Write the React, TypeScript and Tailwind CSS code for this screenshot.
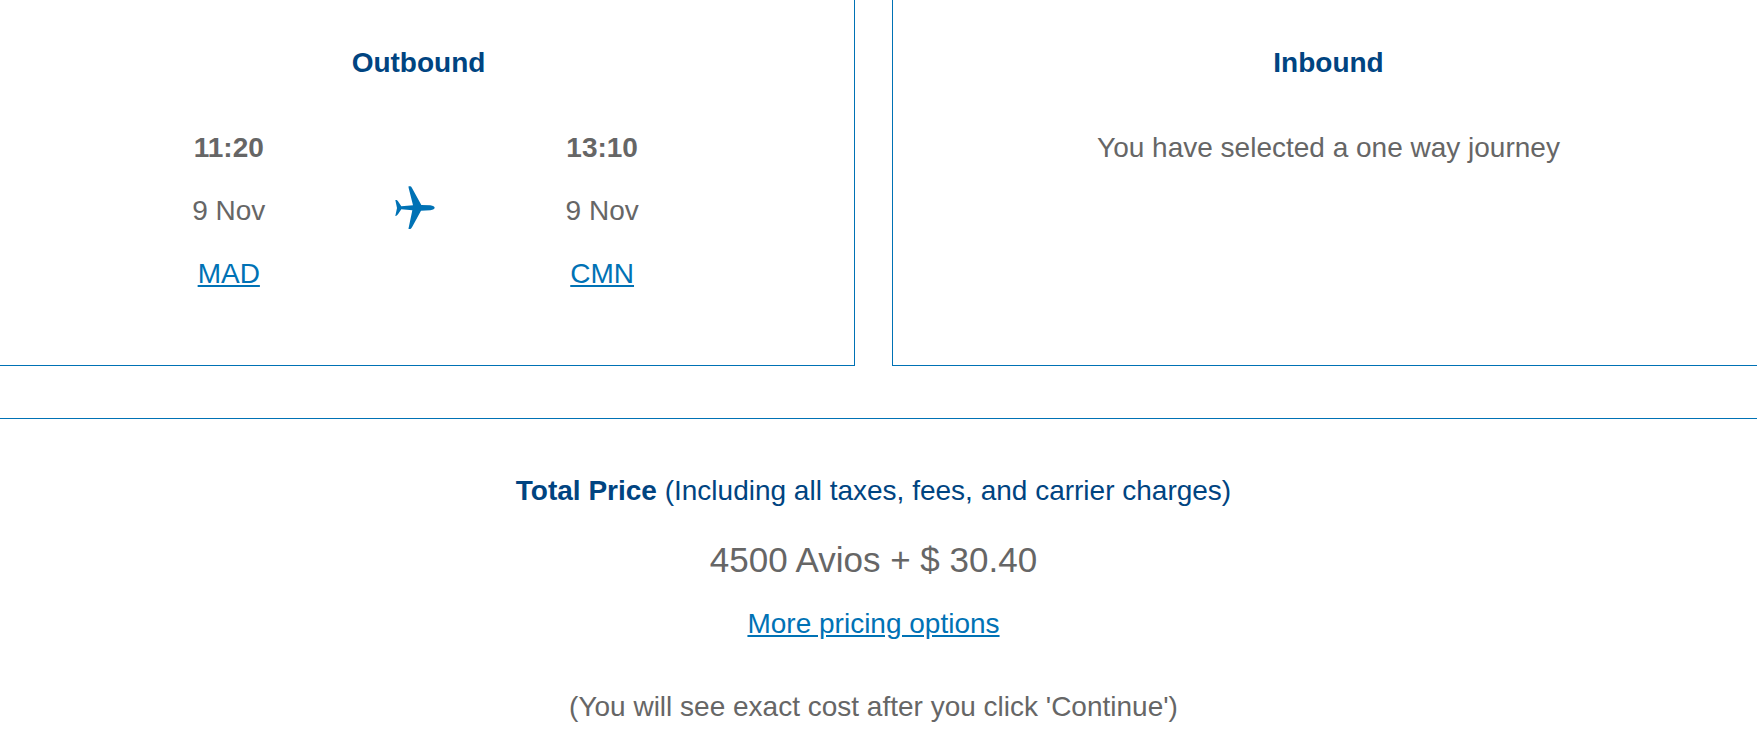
type Stop = { time: string; date: string; airport: string };

const departure: Stop = { time: "11:20", date: "9 Nov", airport: "MAD" };
const arrival: Stop = { time: "13:10", date: "9 Nov", airport: "CMN" };

function PlaneIcon() {
  return (
    <svg viewBox="44 30 120 129" width="40" height="43" fill="#0072b5" aria-hidden="true">
      <path d="M85 31 L90 31 Q93 32 95 36 L123 87 L150 88 Q163 90 163 95.5 Q163 101 150 103 L122 104 L95 154 Q92 159 90 159 L85 159 Q84 158 85 155 L96 103 L63 100 L53 115 Q50 119 47 120 L45 120 L50 96 L45 72 L49 72 Q51 73 53 76 L63 91 L98 88 L85 36 Q84 32 85 31 Z" />
    </svg>
  );
}

function FlightStop({ time, date, airport }: Stop) {
  return (
    <div className="flex flex-col items-center gap-[21px]">
      <strong className="font-bold">{time}</strong>
      <span>{date}</span>
      <a href="#airport" className="text-[#0072b5] underline">
        {airport}
      </a>
    </div>
  );
}

export default function App() {
  return (
    <main className="overflow-hidden bg-white pb-4 font-['Liberation_Sans',Arial,sans-serif] text-[28px] leading-[42px] text-[#666666]">
      <div className="-ml-[18px] -mr-2">
        <div className="grid grid-cols-2 gap-[37px] text-center">
          <section className="border-x border-b border-[#0072b5] pt-[42px] pb-[70px]">
            <h2 className="font-bold text-[#004481]">Outbound</h2>
            <div className="mt-[43px] grid grid-cols-3 pr-[18.2%] pl-[17.5%]">
              <FlightStop {...departure} />
              <div className="flex items-center justify-center pb-2">
                <PlaneIcon />
              </div>
              <FlightStop {...arrival} />
            </div>
          </section>
          <section className="border-x border-b border-[#0072b5] pt-[42px] pb-[70px]">
            <h2 className="font-bold text-[#004481]">Inbound</h2>
            <p className="mt-[43px]">You have selected a one way journey</p>
          </section>
        </div>
        <section className="mt-[52px] border-t border-[#0072b5] pt-[51px] text-center">
          <h2 className="text-[#004481]">
            <strong className="font-bold">Total Price</strong> (Including all taxes, fees, and carrier charges)
          </h2>
          <p className="mt-[22px] text-[35px] leading-[52px]">4500 Avios + $ 30.40</p>
          <p className="mt-[17px]">
            <a href="#pricing" className="text-[#0072b5] underline">
              More pricing options
            </a>
          </p>
          <p className="mt-[41px]">(You will see exact cost after you click 'Continue')</p>
        </section>
      </div>
    </main>
  );
}
